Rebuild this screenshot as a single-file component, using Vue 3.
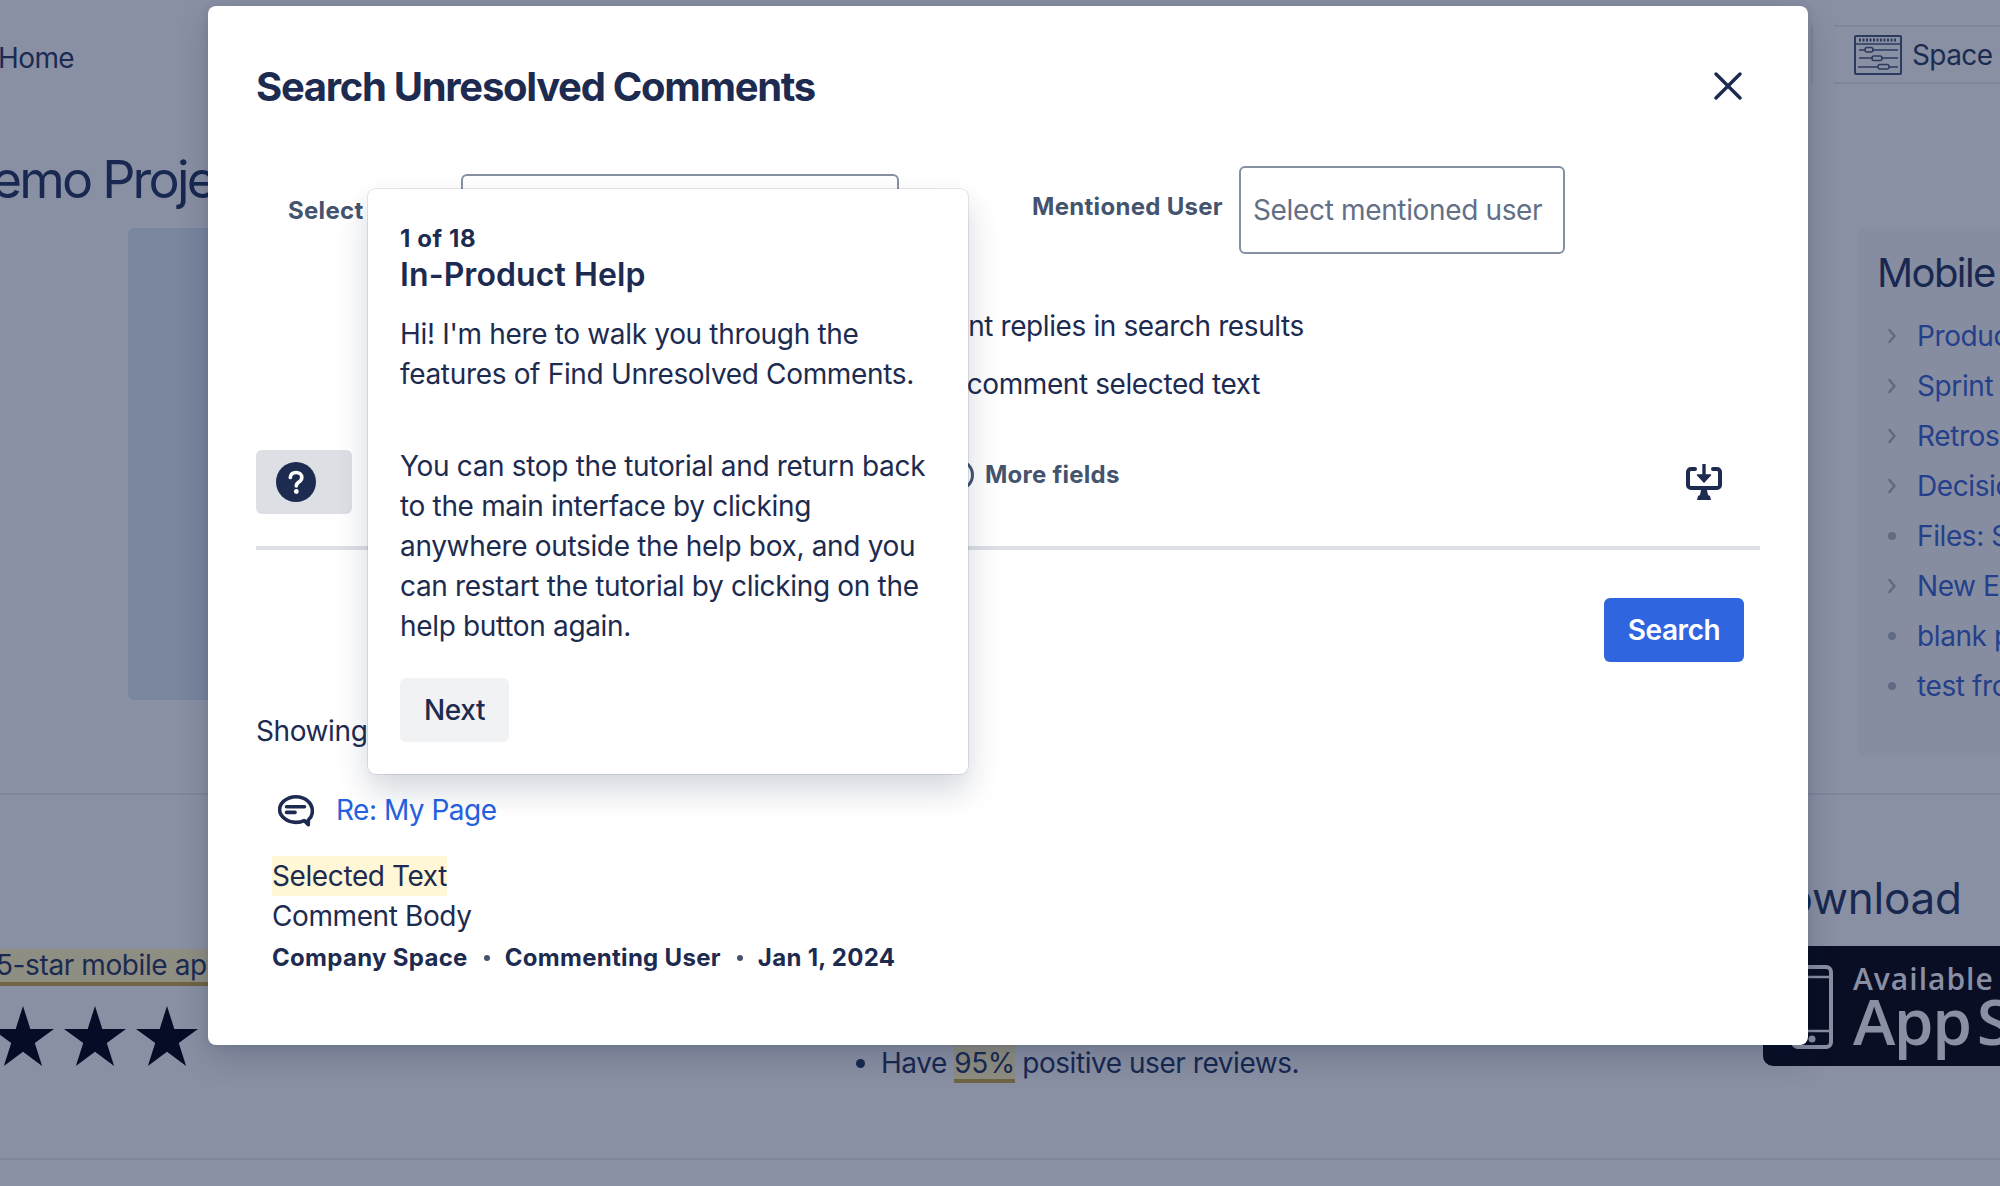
<script setup>
const treeItems = [
  { label: 'Product Requirements', branch: true },
  { label: 'Sprint Planning', branch: true },
  { label: 'Retrospectives', branch: true },
  { label: 'Decision Log', branch: true },
  { label: 'Files: Shared', branch: false },
  { label: 'New Employee', branch: true },
  { label: 'blank page', branch: false },
  { label: 'test from mobile', branch: false },
]
const stars = [1, 2, 3]
const helpParagraphs = [
  "Hi! I'm here to walk you through the features of Find Unresolved Comments.",
  'You can stop the tutorial and return back to the main interface by clicking anywhere outside the help box, and you can restart the tutorial by clicking on the help button again.',
]
</script>

<template>
  <div class="page">
    <div class="backdrop">
      <header class="topbar">
        <span class="crumb">Home</span>
        <div class="top-right">
          <div class="top-box"></div>
          <div class="space-tab">
            <svg class="space-icon" width="48" height="40" viewBox="0 0 48 40" fill="none" stroke="#2b3a5e" stroke-width="1.5">
              <rect x="1" y="1" width="46" height="38" rx="1" stroke-width="2" />
              <path d="M5 5h38" stroke-width="3" stroke-dasharray="2 1.5" />
              <path d="M1 9h46" />
              <path d="M5 15h6M18 15h26M5 23h14M27 23h17M4 32h20M35 32h9" />
              <rect x="11" y="12.5" width="8" height="4.5" rx="2" />
              <rect x="18" y="21" width="10" height="4.5" rx="2" />
              <rect x="24" y="29.5" width="11" height="4.5" rx="2" />
            </svg>
            <span class="crumb">Space tools</span>
          </div>
        </div>
      </header>

      <h1 class="page-title">Demo Project</h1>

      <section class="columns">
        <div class="hero-panel"></div>
        <aside class="tree-panel">
          <h2 class="tree-title">Mobile App</h2>
          <ul class="tree-list">
            <li v-for="item in treeItems" :key="item.label" class="tree-item">
              <span class="tree-marker">
                <svg v-if="item.branch" width="10" height="16" viewBox="0 0 10 16" fill="none" stroke="#5f6a83" stroke-width="2.6" stroke-linecap="round" stroke-linejoin="round">
                  <path d="M2.500 2l5 6-5 6" />
                </svg>
                <i v-else class="tree-dot"></i>
              </span>
              <span class="tree-link">{{ item.label }}</span>
            </li>
          </ul>
        </aside>
      </section>

      <section class="lower">
        <div class="lower-left">
          <p class="rated"><mark class="rated-mark">5-star mobile app</mark></p>
          <div class="stars">
            <svg v-for="s in stars" :key="s" width="62" height="60" viewBox="0 0 62 60" fill="#070c26">
              <path d="M31 0l7.300 22.900H62L42.800 37 50.100 60 31 45.800 11.900 60 19.200 37 0 22.900h23.700z" />
            </svg>
          </div>
        </div>
        <div class="lower-mid">
          <ul class="bullets">
            <li>Have <mark class="pct">95%</mark> positive user reviews.</li>
          </ul>
        </div>
        <div class="lower-right">
          <h2 class="download">Download</h2>
          <div class="badge">
            <svg class="phone" width="42" height="84" viewBox="0 0 42 84" fill="none" stroke="#8a90a3">
              <rect x="2" y="2" width="38" height="80" rx="5" stroke-width="4" />
              <path d="M3 12h36M3 66h36" stroke-width="2.500" />
              <circle cx="21" cy="74" r="3.500" fill="#8a90a3" stroke="none" />
            </svg>
            <div class="badge-text">
              <span class="badge-small">Available on the</span>
              <span class="badge-big">App Store</span>
            </div>
          </div>
        </div>
      </section>
    </div>

    <div class="modal">
      <header class="modal-head">
        <h2 class="modal-title">Search Unresolved Comments</h2>
        <svg class="close" width="28" height="28" viewBox="0 0 28 28" fill="none" stroke="#1c2b4f" stroke-width="3.400" stroke-linecap="round">
          <path d="M2 2l24 24M26 2L2 26" />
        </svg>
      </header>

      <div class="filters">
        <label class="f-label f-space">Select Space</label>
        <div class="f-input f-input-space"></div>
        <label class="f-label f-user">Mentioned User</label>
        <div class="f-input f-input-user">Select mentioned user</div>
      </div>

      <p class="check check-one">Include comment replies in search results</p>
      <p class="check check-two">Include resolved comment selected text</p>

      <div class="actions">
        <button class="help-btn" type="button">
          <svg width="40" height="40" viewBox="0 0 40 40">
            <circle cx="20" cy="20" r="20" fill="#1c2b4f" />
            <path d="M14.300 15.500c.3-3.300 2.700-5 5.800-5 3.300 0 5.700 2 5.700 4.900 0 2.400-1.300 3.500-3 4.700-1.700 1.100-2.500 2-2.500 3.900" fill="none" stroke="#fff" stroke-width="3.600" stroke-linecap="round" />
            <circle cx="20.300" cy="29.500" r="2.400" fill="#fff" />
          </svg>
        </button>
        <div class="more">
          <svg width="32" height="32" viewBox="0 0 32 32" fill="none" stroke="#44546f" stroke-width="3">
            <circle cx="16" cy="16" r="14.500" />
          </svg>
          <span>More fields</span>
        </div>
        <svg class="export" width="36" height="36" viewBox="0 0 36 36" fill="#1c2b4f">
          <path d="M9 5H5a3 3 0 0 0-3 3v13a3 3 0 0 0 3 3h26a3 3 0 0 0 3-3V8a3 3 0 0 0-3-3h-4" fill="none" stroke="#1c2b4f" stroke-width="4" stroke-linecap="round" />
          <path d="M16.300 0h3.400v11h-3.400z" />
          <path d="M11.500 11h13L18 18z" stroke="#1c2b4f" stroke-width="1.500" stroke-linejoin="round" />
          <path d="M15 26h6l1 5 2 1 1 4H11l1-4 2-1z" />
        </svg>
      </div>

      <div class="divider"></div>

      <div class="search-row">
        <button class="search-btn" type="button">Search</button>
      </div>

      <p class="showing">Showing 1 of 1 result</p>

      <div class="result-head">
        <svg width="36" height="33" viewBox="0 0 38 33" fill="none" stroke="#1c2b4f">
          <path d="M32 26.500c3-2.700 4.300-6 4.300-9.200C36.300 8.500 28.600 2 19 2S1.700 8.500 1.700 15.500 9.400 29 19 29c3.200 0 6.200-.7 8.700-1.900l4.300 4.400z" stroke-width="3.800" stroke-linejoin="round" />
          <path d="M9 12.500h19M9 18.500h9" stroke-width="3.800" stroke-linecap="round" />
        </svg>
        <a class="result-link">Re: My Page</a>
      </div>

      <div class="result-body">
        <div><span class="selected">Selected Text</span></div>
        <div>Comment Body</div>
        <div class="meta">
          <span>Company Space</span><i class="sep"></i><span>Commenting User</span><i class="sep"></i><span>Jan 1, 2024</span>
        </div>
      </div>

      <div class="help-card">
        <div class="step">1 of 18</div>
        <div class="help-title">In-Product Help</div>
        <div class="help-copy">
          <p v-for="(para, i) in helpParagraphs" :key="i">{{ para }}</p>
        </div>
        <button class="next" type="button">Next</button>
      </div>
    </div>
  </div>
</template>

<style>
html, body { margin: 0; padding: 0; }
</style>

<style scoped>
* { box-sizing: border-box; }
.page {
  position: relative;
  width: 2000px;
  height: 1186px;
  overflow: hidden;
  font-family: Inter, "Liberation Sans", sans-serif;
  font-size: 28px;
  line-height: 40px;
  letter-spacing: -0.4px;
  color: #1c2b4f;
  background: #8a90a3;
}
.backdrop { width: 2000px; height: 1186px; color: #182850; }
.topbar {
  display: flex;
  justify-content: space-between;
  height: 84px;
  padding-top: 25px;
}
.crumb { color: #1b2b52; line-height: 40px; letter-spacing: -0.6px; }
.topbar > .crumb { margin: 13px 0 0 -2px; }
.top-right { display: flex; width: 300px; margin-right: -113px; flex: none; justify-content: flex-end; }
.top-box {
  width: 40px;
  height: 59px;
  margin-right: 21px;
  border: 2px solid #7f8699;
  border-left: 0;
  border-radius: 0 2px 2px 0;
}
.space-tab {
  display: flex;
  align-items: center;
  gap: 10px;
  width: 279px;
  height: 59px;
  padding-left: 20px;
  white-space: nowrap;
  border-top: 2px solid #7f8699;
  border-bottom: 2px solid #7f8699;
  flex: none;
}
.space-icon { flex: none; }
.page-title {
  margin: 0 0 16px -43px;
  padding-top: 64px;
  font-size: 52px;
  line-height: 64px;
  font-weight: 400;
  letter-spacing: -2.8px;
  white-space: nowrap;
}
.columns { display: flex; justify-content: space-between; height: 527px; }
.hero-panel {
  width: 1000px;
  height: 472px;
  margin-left: 128px;
  background: #7a859e;
  border-radius: 6px;
}
.tree-panel {
  width: 142px;
  padding: 21px 0 0 19px;
  background: #878da1;
  border-radius: 6px 0 0 6px;
  overflow: hidden;
  white-space: nowrap;
}
.tree-title { margin: 0 0 14px; font-size: 40px; line-height: 48px; font-weight: 400; letter-spacing: -1.6px; }
.tree-list { margin: 0; padding: 0; list-style: none; }
.tree-item { display: flex; align-items: center; height: 50px; }
.tree-marker { display: flex; align-items: center; justify-content: center; width: 40px; padding-right: 10px; flex: none; }
.tree-dot { width: 8px; height: 8px; border-radius: 50%; background: #5f6a83; }
.tree-link { color: #24408a; }
.lower {
  display: grid;
  grid-template-columns: 850px 913px 237px;
  height: 367px;
  margin-top: 38px;
  border-top: 2px solid #7d879c;
  border-bottom: 2px solid #7d879c;
}
.lower-left { padding-top: 154px; overflow: hidden; }
.rated { margin: 0 0 0 -4px; white-space: nowrap; }
.rated-mark {
  display: block;
  width: max-content;
  height: 37px;
  line-height: 33px;
  color: #1a2a52;
  background: #8f8e82;
  border-bottom: 4px solid #6f6443;
}
.stars { display: flex; gap: 10px; margin: 20px 0 0 -8px; }
.stars svg { flex: none; }
.lower-mid { padding-top: 248px; }
.bullets { margin: 0; padding: 0 0 0 31px; letter-spacing: -0.45px; }
.bullets li { line-height: 40px; }
.pct {
  display: inline-block;
  height: 38px;
  line-height: 36px;
  color: #1a2a52;
  background: #8f8e82;
  border-bottom: 4px solid #6f6443;
}
.lower-right { padding-top: 77px; white-space: nowrap; }
.download {
  margin: 0 0 22px -8px;
  font-size: 44px;
  line-height: 52px;
  font-weight: 400;
  letter-spacing: -0.2px;
}
.badge {
  display: flex;
  gap: 20px;
  width: 420px;
  height: 120px;
  padding: 19px 0 0 28px;
  background: #090e24;
  border-radius: 10px;
  font-family: "Open Sans", sans-serif;
  letter-spacing: 0;
  color: #8a90a3;
}
.phone { flex: none; }
.badge-text { display: flex; flex-direction: column; margin-top: -1px; }
.badge-small { font-size: 30px; line-height: 30px; font-weight: 600; letter-spacing: 1px; }
.badge-big { font-size: 64px; line-height: 54px; font-weight: 600; letter-spacing: -1.5px; word-spacing: -9px; }

.modal {
  position: absolute;
  left: 208px;
  top: 6px;
  width: 1600px;
  height: 1039px;
  padding: 56px 48px 0;
  background: #fff;
  border-radius: 8px;
  box-shadow: 0 12px 32px rgba(9, 30, 66, 0.2), 0 0 8px rgba(9, 30, 66, 0.1);
}
.modal-head { display: flex; justify-content: space-between; align-items: center; height: 48px; }
.modal-title {
  margin: 1px 0 0;
  font-size: 40px;
  line-height: 48px;
  font-weight: 700;
  letter-spacing: -1.3px;
  color: #1c2b4f;
}
.close { margin-right: 18px; }
.filters { position: relative; display: flex; height: 88px; margin-top: 56px; }
.f-label { font-size: 24px; line-height: 32px; font-weight: 700; letter-spacing: 0.3px; color: #44546f; white-space: nowrap; }
.f-space { width: 205px; margin: 29px 0 0 32px; overflow: hidden; flex: none; }
.f-user { width: 191px; margin: 25px 16px 0 133px; flex: none; }
.f-input { border: 2px solid #8590a2; border-radius: 6px; background: #fff; flex: none; }
.f-input-space { width: 438px; height: 80px; margin-top: 8px; margin-left: -32px; }
.f-input-user { width: 326px; height: 88px; padding: 0 12px; line-height: 84px; letter-spacing: -0.35px; color: #626f86; white-space: nowrap; }
.check { margin: 0; text-align: right; white-space: nowrap; }
.check-one { width: 1048px; margin-top: 52px; }
.check-two { width: 1004px; margin-top: 18px; }
.actions { position: relative; display: flex; align-items: center; height: 64px; margin-top: 46px; }
.help-btn {
  display: flex;
  align-items: center;
  justify-content: center;
  width: 96px;
  height: 64px;
  padding: 0 17px 0 0;
  border: 0;
  border-radius: 6px;
  background: #dcdfe4;
}
.more {
  display: flex;
  align-items: center;
  gap: 11px;
  margin: -15px 0 0 590px;
  font-size: 24px;
  font-weight: 700;
  letter-spacing: 0.25px;
  color: #44546f;
}
.export { margin-left: auto; margin-right: 38px; }
.divider { height: 4px; margin-top: 32px; background: #dcdfe4; }
.search-row { display: flex; justify-content: flex-end; margin-top: 48px; padding-right: 16px; }
.search-btn {
  width: 140px;
  height: 64px;
  padding: 0;
  border: 0;
  border-radius: 6px;
  background: #2f65df;
  color: #fff;
  font: 600 28px/40px Inter, sans-serif;
  letter-spacing: -0.4px;
}
.showing { margin: 49px 0 0; }
.result-head { display: flex; align-items: center; gap: 22px; height: 40px; margin-top: 39px; padding-left: 22px; }
.result-link { color: #2462e0; letter-spacing: -0.5px; }
.result-body { margin-top: 26px; padding-left: 16px; }
.selected { display: inline-block; background: #fff7d6; }
.meta { display: flex; align-items: center; margin-top: 2px; font-size: 24px; font-weight: 700; letter-spacing: 0.3px; }
.sep { width: 6px; height: 6px; margin: 0 15px 0 16px; border-radius: 50%; background: #44546f; }

.help-card {
  position: absolute;
  left: 160px;
  top: 183px;
  width: 600px;
  height: 585px;
  padding: 33px 32px 32px;
  background: #fff;
  border-radius: 8px;
  box-shadow: 0 0 0 1px rgba(9, 30, 66, 0.1), 0 16px 32px rgba(9, 30, 66, 0.18);
}
.step { margin-top: 1px; font-size: 24px; line-height: 32px; font-weight: 700; letter-spacing: 0.6px; }
.help-title { font-size: 32px; line-height: 40px; font-weight: 600; letter-spacing: 0.1px; }
.help-copy { margin-top: 19px; letter-spacing: -0.33px; }
.help-copy p { margin: 0 0 52px; }
.help-copy p:last-child { margin-bottom: 32px; }
.next {
  width: 109px;
  height: 64px;
  padding: 0;
  border: 0;
  border-radius: 6px;
  background: #f1f2f4;
  color: #1c2b4f;
  font: 500 28px/40px Inter, sans-serif;
  letter-spacing: -0.4px;
}
</style>
